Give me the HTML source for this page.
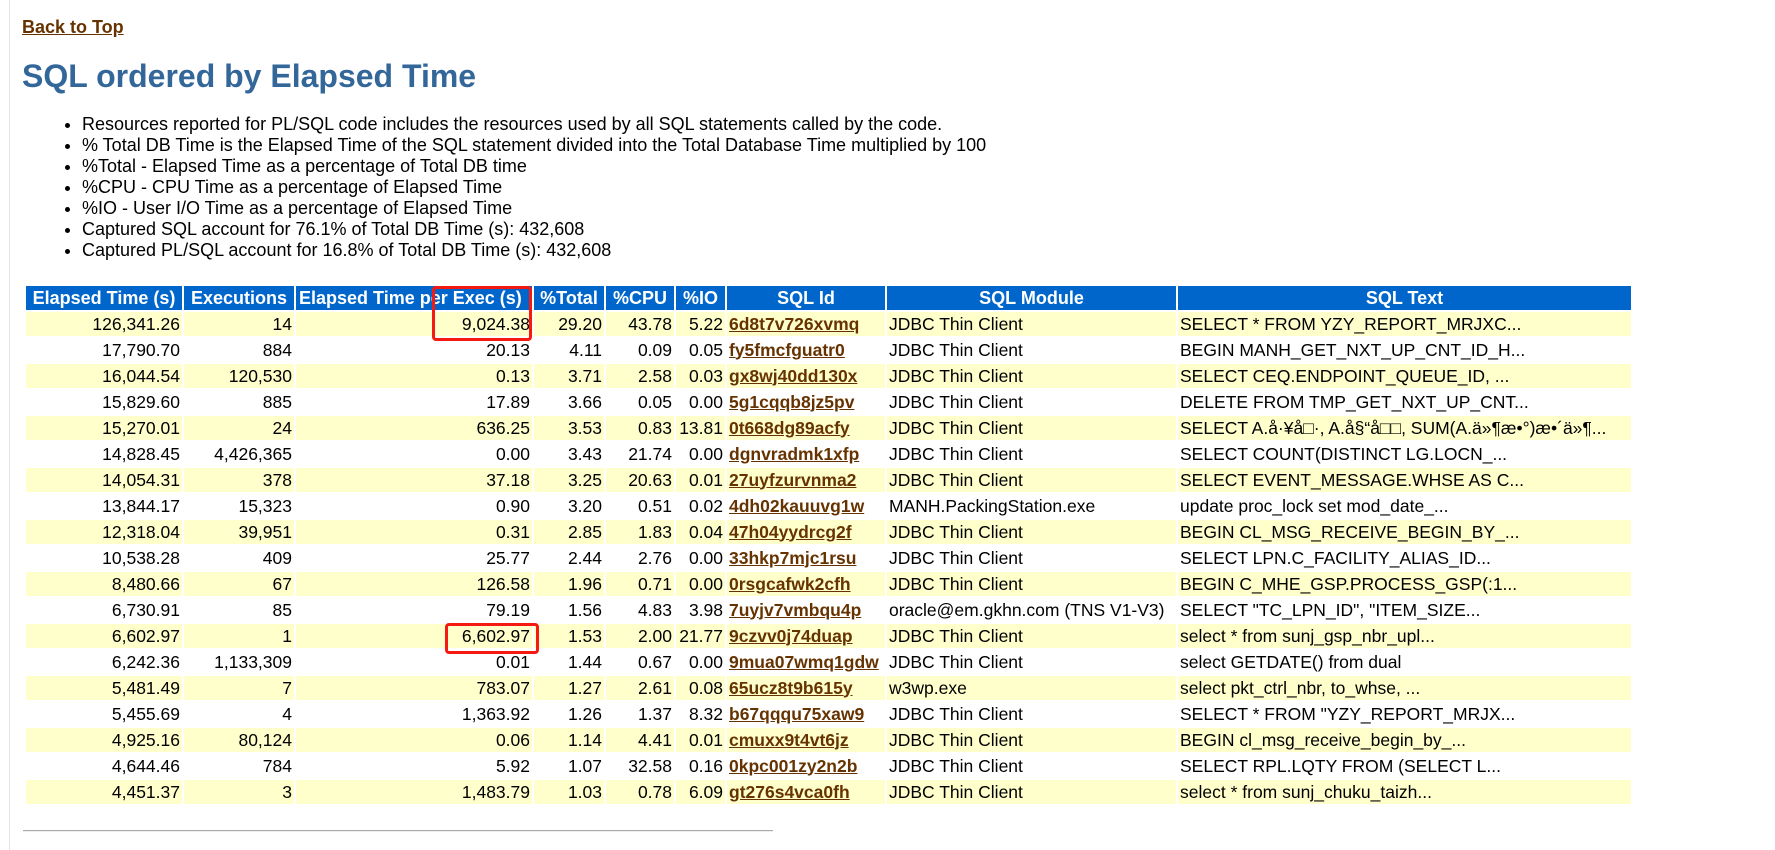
<!DOCTYPE html>
<html><head><meta charset="utf-8"><style>
body{margin:0;background:#fff;font-family:"Liberation Sans",Arial,sans-serif;width:1775px;height:850px;overflow:hidden;position:relative}
.vl{position:absolute;left:9px;top:0;width:1px;height:850px;background:#e4e4e4}
a{color:#663300;font-weight:bold}
.btt{position:absolute;left:22px;top:17px;font-size:18px}
h2{position:absolute;left:22px;top:58px;margin:0;font-size:32px;color:#336699;font-weight:bold}
ul{position:absolute;left:42px;top:114px;margin:0;padding-left:40px;font-size:18px;line-height:21px;color:#000}
table{position:absolute;left:24px;top:284px;border-collapse:separate;border-spacing:2px;font-size:17.5px;table-layout:fixed}
th{background:#0066cc;color:#fff;font-weight:bold;height:24px;padding:0 3px;white-space:nowrap;overflow:hidden;font-size:18px}
td{height:24px;padding:0 2px;white-space:nowrap;overflow:hidden;text-align:right}
tr:nth-child(even) td{background:#ffffcc}
td.l{text-align:left}
.box{position:absolute;border:3px solid #f41a12;border-radius:4px}
.hr{position:absolute;left:23px;top:830px;width:750px;height:1px;background:#aaa;border-bottom:1px solid #eee}
</style></head><body>
<div class="vl"></div>
<a class="btt" href="#">Back to Top</a>
<h2>SQL ordered by Elapsed Time</h2>
<ul>
<li>Resources reported for PL/SQL code includes the resources used by all SQL statements called by the code.</li>
<li>% Total DB Time is the Elapsed Time of the SQL statement divided into the Total Database Time multiplied by 100</li>
<li>%Total - Elapsed Time as a percentage of Total DB time</li>
<li>%CPU - CPU Time as a percentage of Elapsed Time</li>
<li>%IO - User I/O Time as a percentage of Elapsed Time</li>
<li>Captured SQL account for 76.1% of Total DB Time (s): 432,608</li>
<li>Captured PL/SQL account for 16.8% of Total DB Time (s): 432,608</li>
</ul>
<table>
<colgroup><col style="width:156px"><col style="width:110px"><col style="width:236px"><col style="width:70px"><col style="width:68px"><col style="width:49px"><col style="width:158px"><col style="width:289px"><col style="width:453px"></colgroup>
<tr><th>Elapsed Time (s)</th><th>Executions</th><th style="text-align:left">Elapsed Time per Exec (s)</th><th>%Total</th><th>%CPU</th><th>%IO</th><th>SQL Id</th><th>SQL Module</th><th>SQL Text</th></tr>
<tr><td>126,341.26</td><td>14</td><td>9,024.38</td><td>29.20</td><td>43.78</td><td>5.22</td><td class="l"><a href="#">6d8t7v726xvmq</a></td><td class="l">JDBC Thin Client</td><td class="l">SELECT * FROM YZY_REPORT_MRJXC...</td></tr>
<tr><td>17,790.70</td><td>884</td><td>20.13</td><td>4.11</td><td>0.09</td><td>0.05</td><td class="l"><a href="#">fy5fmcfguatr0</a></td><td class="l">JDBC Thin Client</td><td class="l">BEGIN MANH_GET_NXT_UP_CNT_ID_H...</td></tr>
<tr><td>16,044.54</td><td>120,530</td><td>0.13</td><td>3.71</td><td>2.58</td><td>0.03</td><td class="l"><a href="#">gx8wj40dd130x</a></td><td class="l">JDBC Thin Client</td><td class="l">SELECT CEQ.ENDPOINT_QUEUE_ID, ...</td></tr>
<tr><td>15,829.60</td><td>885</td><td>17.89</td><td>3.66</td><td>0.05</td><td>0.00</td><td class="l"><a href="#">5g1cqqb8jz5pv</a></td><td class="l">JDBC Thin Client</td><td class="l">DELETE FROM TMP_GET_NXT_UP_CNT...</td></tr>
<tr><td>15,270.01</td><td>24</td><td>636.25</td><td>3.53</td><td>0.83</td><td>13.81</td><td class="l"><a href="#">0t668dg89acfy</a></td><td class="l">JDBC Thin Client</td><td class="l">SELECT A.å·¥å□·, A.å§“å□□, SUM(A.ä»¶æ•°)æ•´ä»¶...</td></tr>
<tr><td>14,828.45</td><td>4,426,365</td><td>0.00</td><td>3.43</td><td>21.74</td><td>0.00</td><td class="l"><a href="#">dgnvradmk1xfp</a></td><td class="l">JDBC Thin Client</td><td class="l">SELECT COUNT(DISTINCT LG.LOCN_...</td></tr>
<tr><td>14,054.31</td><td>378</td><td>37.18</td><td>3.25</td><td>20.63</td><td>0.01</td><td class="l"><a href="#">27uyfzurvnma2</a></td><td class="l">JDBC Thin Client</td><td class="l">SELECT EVENT_MESSAGE.WHSE AS C...</td></tr>
<tr><td>13,844.17</td><td>15,323</td><td>0.90</td><td>3.20</td><td>0.51</td><td>0.02</td><td class="l"><a href="#">4dh02kauuvg1w</a></td><td class="l">MANH.PackingStation.exe</td><td class="l">update proc_lock set mod_date_...</td></tr>
<tr><td>12,318.04</td><td>39,951</td><td>0.31</td><td>2.85</td><td>1.83</td><td>0.04</td><td class="l"><a href="#">47h04yydrcg2f</a></td><td class="l">JDBC Thin Client</td><td class="l">BEGIN CL_MSG_RECEIVE_BEGIN_BY_...</td></tr>
<tr><td>10,538.28</td><td>409</td><td>25.77</td><td>2.44</td><td>2.76</td><td>0.00</td><td class="l"><a href="#">33hkp7mjc1rsu</a></td><td class="l">JDBC Thin Client</td><td class="l">SELECT LPN.C_FACILITY_ALIAS_ID...</td></tr>
<tr><td>8,480.66</td><td>67</td><td>126.58</td><td>1.96</td><td>0.71</td><td>0.00</td><td class="l"><a href="#">0rsgcafwk2cfh</a></td><td class="l">JDBC Thin Client</td><td class="l">BEGIN C_MHE_GSP.PROCESS_GSP(:1...</td></tr>
<tr><td>6,730.91</td><td>85</td><td>79.19</td><td>1.56</td><td>4.83</td><td>3.98</td><td class="l"><a href="#">7uyjv7vmbqu4p</a></td><td class="l">oracle@em.gkhn.com (TNS V1-V3)</td><td class="l">SELECT "TC_LPN_ID", "ITEM_SIZE...</td></tr>
<tr><td>6,602.97</td><td>1</td><td>6,602.97</td><td>1.53</td><td>2.00</td><td>21.77</td><td class="l"><a href="#">9czvv0j74duap</a></td><td class="l">JDBC Thin Client</td><td class="l">select * from sunj_gsp_nbr_upl...</td></tr>
<tr><td>6,242.36</td><td>1,133,309</td><td>0.01</td><td>1.44</td><td>0.67</td><td>0.00</td><td class="l"><a href="#">9mua07wmq1gdw</a></td><td class="l">JDBC Thin Client</td><td class="l">select GETDATE() from dual</td></tr>
<tr><td>5,481.49</td><td>7</td><td>783.07</td><td>1.27</td><td>2.61</td><td>0.08</td><td class="l"><a href="#">65ucz8t9b615y</a></td><td class="l">w3wp.exe</td><td class="l">select pkt_ctrl_nbr, to_whse, ...</td></tr>
<tr><td>5,455.69</td><td>4</td><td>1,363.92</td><td>1.26</td><td>1.37</td><td>8.32</td><td class="l"><a href="#">b67qqqu75xaw9</a></td><td class="l">JDBC Thin Client</td><td class="l">SELECT * FROM "YZY_REPORT_MRJX...</td></tr>
<tr><td>4,925.16</td><td>80,124</td><td>0.06</td><td>1.14</td><td>4.41</td><td>0.01</td><td class="l"><a href="#">cmuxx9t4vt6jz</a></td><td class="l">JDBC Thin Client</td><td class="l">BEGIN cl_msg_receive_begin_by_...</td></tr>
<tr><td>4,644.46</td><td>784</td><td>5.92</td><td>1.07</td><td>32.58</td><td>0.16</td><td class="l"><a href="#">0kpc001zy2n2b</a></td><td class="l">JDBC Thin Client</td><td class="l">SELECT RPL.LQTY FROM (SELECT L...</td></tr>
<tr><td>4,451.37</td><td>3</td><td>1,483.79</td><td>1.03</td><td>0.78</td><td>6.09</td><td class="l"><a href="#">gt276s4vca0fh</a></td><td class="l">JDBC Thin Client</td><td class="l">select * from sunj_chuku_taizh...</td></tr>
</table>
<div class="box" style="left:432px;top:286px;width:94px;height:49px"></div>
<div class="box" style="left:445px;top:623px;width:88px;height:25px"></div>
<div class="hr"></div>
</body></html>
